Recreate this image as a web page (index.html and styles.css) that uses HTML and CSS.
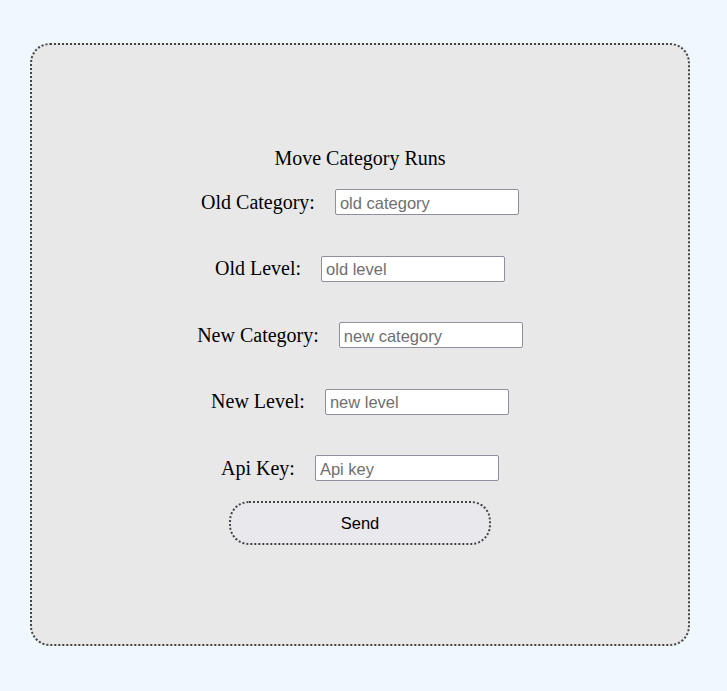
FILE: index.html
```html
<!DOCTYPE html>
<html>
<head>
<meta charset="utf-8">
<link rel="stylesheet" href="styles.css">
</head>
<body>
<div class="card">
  <h1 class="title">Move Category Runs</h1>
  <div class="row"><label>Old Category:</label><input type="text" placeholder="old category"></div>
  <div class="row"><label>Old Level:</label><input type="text" placeholder="old level"></div>
  <div class="row"><label>New Category:</label><input type="text" placeholder="new category"></div>
  <div class="row"><label>New Level:</label><input type="text" placeholder="new level"></div>
  <div class="row"><label>Api Key:</label><input type="text" placeholder="Api key"></div>
  <button class="send">Send</button>
</div>
</body>
</html>
```
FILE: styles.css
```css
html, body {
  margin: 0;
  padding: 0;
  background: #f0f8ff;
}
body {
  padding: 43px 37px 45px 30px;
  font-family: "Liberation Serif", "Times New Roman", serif;
}
.card {
  width: 660px;
  height: 603px;
  box-sizing: border-box;
  border: 2px dotted #444;
  border-radius: 20px;
  background: #e8e8e8;
  display: flex;
  flex-direction: column;
  align-items: center;
  padding-top: 102px;
}
.title {
  margin: 0 0 20px;
  font-size: 20px;
  font-weight: normal;
  line-height: 22px;
  color: #000;
}
.row {
  display: flex;
  align-items: center;
  gap: 20px;
  margin-bottom: 40.5px;
  font-size: 20px;
}
.row:nth-of-type(5) {
  margin-bottom: 20px;
}
.row label {
  color: #000;
}
.row input {
  width: 184px;
  height: 26px;
  box-sizing: border-box;
  border: 1px solid #8f8f9d;
  border-radius: 2px;
  background: #fff;
  padding: 2px 4px 0;
  font-family: "Liberation Sans", Arial, sans-serif;
  font-size: 16.5px;
}
.row input::placeholder {
  color: #6f6f6f;
}
.send {
  width: 262px;
  height: 44px;
  border: 2px dotted #444;
  border-radius: 20px;
  background: #e9e8ed;
  font-family: "Liberation Sans", Arial, sans-serif;
  font-size: 16.5px;
  color: #000;
}
```
